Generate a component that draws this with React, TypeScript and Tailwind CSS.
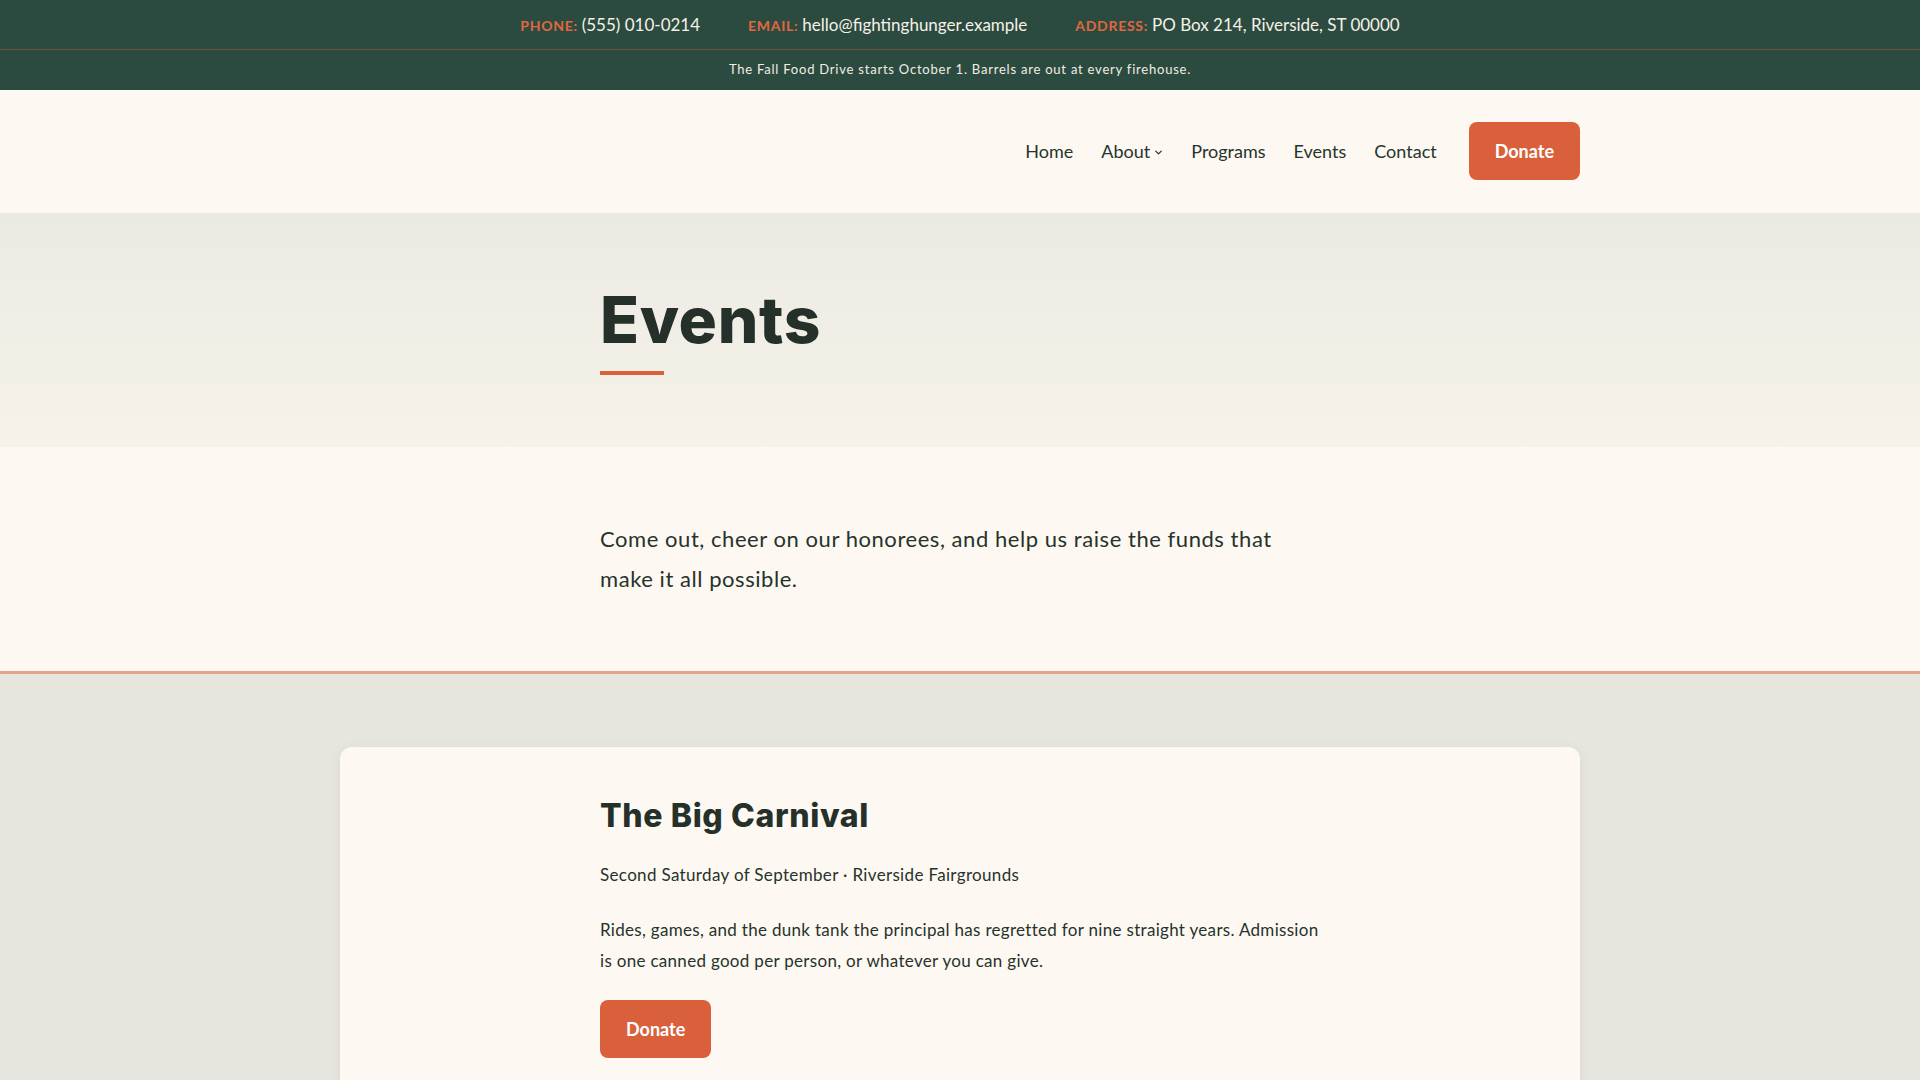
import React from "react";

const Chevron = () => (
    <svg width="9" height="9" viewBox="0 0 10 10" fill="none" className="mt-[3px]">
        <path d="M2 3.5 L5 6.5 L8 3.5" stroke="currentColor" strokeWidth="1.4" strokeLinecap="round" strokeLinejoin="round"/>
    </svg>
);

const TopItem = ({label, value}: { label: string; value: string }) => (
    <div className="flex items-baseline">
        <span className="mr-1 text-[14px] font-bold uppercase tracking-[0.05em] text-[#e0673f]">{label}</span>
        <span>{value}</span>
    </div>
);

const App = () => {
    const nav = ["Home", "About", "Programs", "Events", "Contact"];

    return (
        <div className="min-h-screen bg-[#e7e6de] font-['Lato',sans-serif] text-[#26322c]">
            {/* contact strip */}
            <div className="border-b border-[#71533e] bg-[#2c4b40]">
                <div className="flex h-[49px] items-center justify-center gap-12 text-[17px] text-[#f6f1e7]">
                    <TopItem label="Phone:" value="(555) 010-0214"/>
                    <TopItem label="Email:" value="hello@fightinghunger.example"/>
                    <TopItem label="Address:" value="PO Box 214, Riverside, ST 00000"/>
                </div>
            </div>
            <div className="flex h-[40px] items-center justify-center bg-[#2c4b40] text-[13px] tracking-[0.06em] text-[#f3ede0]">
                The Fall Food Drive starts October 1. Barrels are out at every firehouse.
            </div>

            {/* header */}
            <header className="bg-[#fdf9f2]">
                <div className="mx-auto flex h-[123px] max-w-[1240px] items-center justify-end pb-px">
                    <nav className="flex items-center gap-7 text-[18px] text-[#26342d]">
                        {nav.map(item => (
                            <a key={item} href="#" className="flex items-center gap-1">
                                {item}
                                {item === "About" && <Chevron/>}
                            </a>
                        ))}
                        <a href="#"
                           className="ml-1 rounded-lg bg-[#d9603b] px-[26px] py-4 text-[18px] font-bold leading-[26px] text-white">
                            Donate
                        </a>
                    </nav>
                </div>
            </header>

            {/* page title */}
            <section className="bg-gradient-to-b from-[#ebeae2] to-[#f6f2ea] py-[72px]">
                <div className="mx-auto max-w-[720px]">
                    <h1 className="font-['Inter',sans-serif] text-[64px] font-extrabold leading-[1.1] tracking-[0.01em] text-[#243029]">
                        Events
                    </h1>
                    <div className="mt-4 h-1 w-16 bg-[#d9603b]"/>
                </div>
            </section>

            {/* intro */}
            <section className="border-b-[3px] border-[#e4a18b] bg-[#fdf9f2] py-[72px]">
                <p className="mx-auto max-w-[720px] text-[22px] leading-[40px] tracking-[0.025em] text-[#26322c]">
                    Come out, cheer on our honorees, and help us raise the funds that make it all possible.
                </p>
            </section>

            {/* events list */}
            <section className="px-4 pb-24 pt-[73px]">
                <div className="mx-auto max-w-[1240px] rounded-xl bg-[#fdf9f2] pb-12 pt-[49px] shadow-[0_2px_12px_rgba(40,50,40,0.07)]">
                    <div className="mx-auto max-w-[720px]">
                        <h2 className="font-['Inter',sans-serif] text-[32px] font-extrabold leading-[40px] tracking-[0.02em] text-[#243029]">
                            The Big Carnival
                        </h2>
                        <p className="mt-6 text-[17px] leading-[30.6px] tracking-[0.02em]">
                            Second Saturday of September · Riverside Fairgrounds
                        </p>
                        <p className="mt-6 text-[17px] leading-[30.6px] tracking-[0.018em]">
                            Rides, games, and the dunk tank the principal has regretted for nine straight years.
                            Admission is one canned good per person, or whatever you can give.
                        </p>
                        <a href="#"
                           className="mt-6 inline-block rounded-lg bg-[#d9603b] px-[26px] py-4 text-[18px] font-bold leading-[26px] text-white">
                            Donate
                        </a>
                    </div>
                </div>
            </section>
        </div>
    );
};

export default App;
